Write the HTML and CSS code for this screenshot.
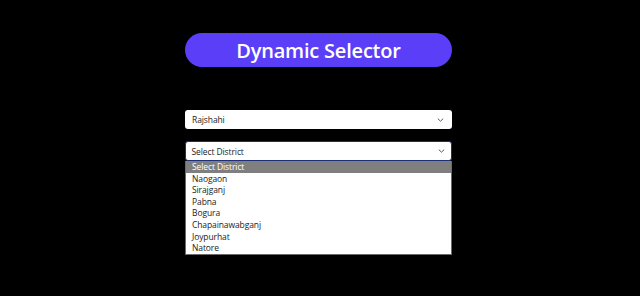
FILE: index.html
```html
<!DOCTYPE html>
<html>
<head>
<meta charset="utf-8">
<link rel="stylesheet" href="styles.css">
</head>
<body>
<div class="wrap">
  <h1 class="title">Dynamic Selector</h1>
  <div class="select">
    <span class="label">Rajshahi</span>
    <svg class="chev" width="7" height="4" viewBox="0 0 7 4"><path d="M0.8 0.6 L3.5 3.2 L6.2 0.6" fill="none" stroke="#555" stroke-width="1"/></svg>
  </div>
  <div class="select focused">
    <span class="label">Select District</span>
    <svg class="chev" width="7" height="4" viewBox="0 0 7 4"><path d="M0.8 0.6 L3.5 3.2 L6.2 0.6" fill="none" stroke="#555" stroke-width="1"/></svg>
  </div>
  <ul class="list">
    <li class="opt active">Select District</li>
    <li class="opt">Naogaon</li>
    <li class="opt">Sirajganj</li>
    <li class="opt">Pabna</li>
    <li class="opt">Bogura</li>
    <li class="opt">Chapainawabganj</li>
    <li class="opt">Joypurhat</li>
    <li class="opt">Natore</li>
  </ul>
</div>
</body>
</html>
```

FILE: styles.css
```css
html, body {
  margin: 0;
  padding: 0;
  background: #000;
  height: 100%;
}
body {
  font-family: "Open Sans", "Noto Sans", sans-serif;
}
.wrap {
  width: 267px;
  margin-left: 185px;
  padding-top: 33px;
  display: flex;
  flex-direction: column;
}
.title {
  margin: 0;
  height: 34px;
  border-radius: 17px;
  background: #5b3ff8;
  color: #fff;
  font-size: 20px;
  font-weight: 600;
  display: flex;
  align-items: center;
  justify-content: center;
  letter-spacing: -0.2px;
}
.select {
  box-sizing: border-box;
  height: 19px;
  margin-top: 43px;
  background: #fff;
  border-radius: 3px;
  display: flex;
  align-items: center;
  justify-content: space-between;
  padding: 0 8px 0 7px;
  font-size: 8.5px;
  letter-spacing: -0.1px;
  color: #222;
}
.select.focused {
  margin-top: 12px;
  height: 20px;
  border: 1.5px solid #1d2f7a;
  padding-left: 5.5px;
  padding-right: 6.5px;
}
.chev { display: block; }
.list {
  list-style: none;
  margin: 0;
  padding: 0;
  background: #fff;
  border: 1px solid #6a6a6a;
  border-top: none;
  font-size: 8.5px;
  letter-spacing: -0.1px;
  color: #222;
}
.opt {
  height: 11.6px;
  line-height: 11.6px;
  padding-left: 6px;
}
.opt.active {
  background: #7f7f7f;
  color: #fff;
}
```
